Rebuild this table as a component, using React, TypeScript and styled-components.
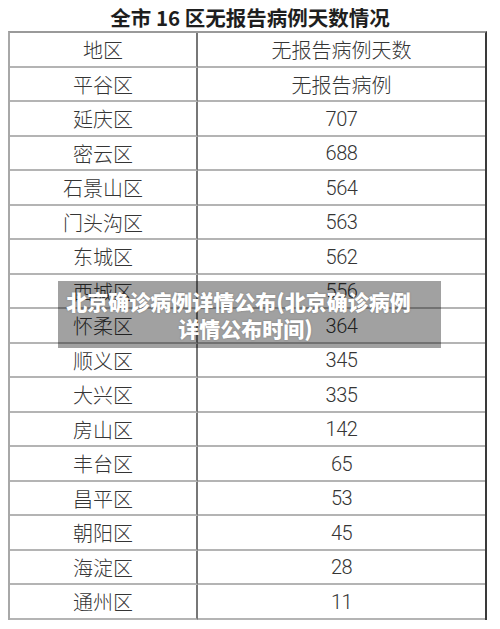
import React from "react";
import styled, { createGlobalStyle } from "styled-components";

const GlobalStyle = createGlobalStyle`
  body {
    margin: 0;
    background: #ffffff;
    font-family: "Noto Sans CJK SC", "Liberation Sans", sans-serif;
  }
`;

const rows: [string, string][] = [
  ["平谷区", "无报告病例"],
  ["延庆区", "707"],
  ["密云区", "688"],
  ["石景山区", "564"],
  ["门头沟区", "563"],
  ["东城区", "562"],
  ["西城区", "556"],
  ["怀柔区", "364"],
  ["顺义区", "345"],
  ["大兴区", "335"],
  ["房山区", "142"],
  ["丰台区", "65"],
  ["昌平区", "53"],
  ["朝阳区", "45"],
  ["海淀区", "28"],
  ["通州区", "11"],
];

const Page = styled.div`
  position: relative;
  width: 500px;
  height: 629px;
  overflow: hidden;
`;

const Title = styled.h1`
  margin: 0;
  padding-top: 3px;
  height: 31px;
  box-sizing: border-box;
  line-height: 28px;
  text-align: center;
  font-size: 20.5px;
  font-weight: 700;
  color: #1e1e1e;
  font-family: "Noto Sans CJK SC", "Liberation Sans", sans-serif;
`;

const Table = styled.div`
  margin-left: 8px;
  width: 479px;
  display: grid;
  grid-template-columns: 188px 1fr;
  grid-auto-rows: 34.5px;
  border-top: 2px solid #9a9a9a;
  border-left: 2px solid #a8a8a8;
  border-right: 2px solid #3a3a3a;
  box-sizing: border-box;
`;

const Cell = styled.div<{ $first?: boolean; $num?: boolean }>`
  display: flex;
  align-items: center;
  justify-content: center;
  box-sizing: border-box;
  border-bottom: 2px solid #b4b4b4;
  border-right: ${(p) => (p.$first ? "2px solid #777777" : "none")};
  color: #353535;
  font-size: 20px;
  font-weight: 300;
  font-family: ${(p) =>
    p.$num
      ? '"Roboto", "Liberation Sans", sans-serif'
      : '"Noto Sans CJK SC", sans-serif'};
  letter-spacing: ${(p) => (p.$num ? "-0.5px" : "0")};
  padding-top: 1px;
`;

const Overlay = styled.div`
  position: absolute;
  left: 58px;
  top: 281px;
  width: 383px;
  height: 67px;
  background: rgba(0, 0, 0, 0.37);
  color: #ffffff;
  display: flex;
  flex-direction: column;
  align-items: center;
  justify-content: center;
  font-family: "Noto Sans CJK SC", "Liberation Sans", sans-serif;
  font-weight: 900;
  font-size: 21px;
  line-height: 27px;
  text-shadow: 0 0 2px rgba(0, 0, 0, 0.25);
`;

const OverlayLine = styled.span<{ $shift: number }>`
  display: block;
  white-space: nowrap;
  transform: translateX(${(p) => p.$shift}px);
`;

export default function App() {
  return (
    <Page>
      <GlobalStyle />
      <Title>全市 16 区无报告病例天数情况</Title>
      <Table>
        <Cell $first>地区</Cell>
        <Cell>无报告病例天数</Cell>
        {rows.map(([name, value]) => (
          <React.Fragment key={name}>
            <Cell $first>{name}</Cell>
            <Cell $num={/^\d+$/.test(value)}>{value}</Cell>
          </React.Fragment>
        ))}
      </Table>
      <Overlay>
        <OverlayLine $shift={-11}>北京确诊病例详情公布(北京确诊病例</OverlayLine>
        <OverlayLine $shift={-4}>详情公布时间)</OverlayLine>
      </Overlay>
    </Page>
  );
}
